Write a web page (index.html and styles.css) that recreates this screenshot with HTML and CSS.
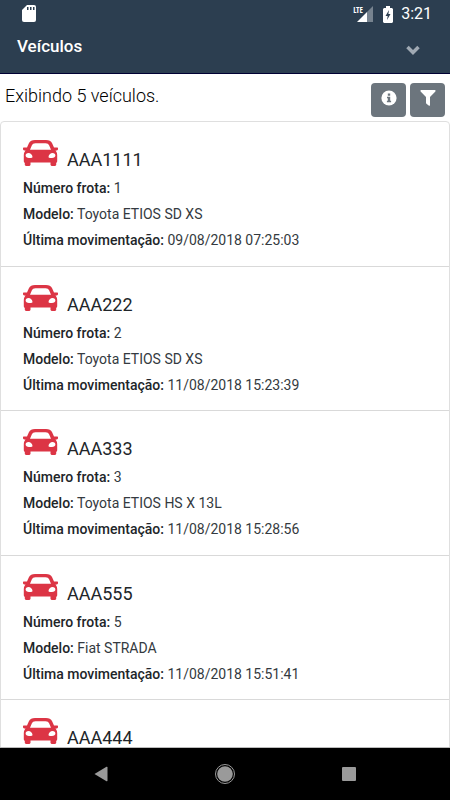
FILE: index.html
```html
<!DOCTYPE html>
<html lang="pt-BR">
<head>
<meta charset="utf-8">
<meta name="viewport" content="width=device-width, initial-scale=1">
<title>Veículos</title>
<link rel="stylesheet" href="styles.css">
</head>
<body>
<svg class="defs" aria-hidden="true">
  <symbol id="car" viewBox="0 0 35 26">
    <path fill-rule="evenodd" d="M12 0H23C26 0 28 1 29 3L31 7.500H34.500L35 8V9.500L34 10.500H32.500L33.500 12C34 13 34.200 14 34.200 15V21C34.200 22 33.800 22.500 33.200 23V25L32.200 26H28.500L27.500 25V22.500H7.500V25L6.500 26H2.800L1.800 25V23C1.200 22.500.8 22 .8 21V15C.8 14 1 13 1.500 12L2.500 10.500H1L0 9.500V8L.5 7.500H4L6 3C7 1 9 0 12 0ZM12.500 3.200C10.500 3.200 9.600 4 8.900 5.300L7 9.800H28L26.100 5.300C25.400 4 24.500 3.200 22.500 3.200ZM5.500 13C3.700 13 2.600 14 2.600 15.500S4 18 6 18C7.500 18 9.500 18.200 9.500 17C9.500 15.200 7.500 13 5.500 13ZM29.500 13C27.500 13 25.500 15.200 25.500 17C25.500 18.200 27.500 18 29 18C31 18 32.400 17 32.400 15.500S31.300 13 29.500 13Z"/>
  </symbol>
</svg>
<div class="app">
  <header class="header">
    <div class="status">
      <svg class="sd" viewBox="0 0 14 18" aria-hidden="true"><path fill="#fff" d="M5 0H12Q14 0 14 2V15Q14 17 12 17H2Q0 17 0 15V5Z"/><path fill="#2c3e50" d="M5 2h1.500v3H5zM8 2h1.500v3H8zM11 2h1.500v3H11z"/></svg>
      <div class="signal">
        <span class="lte">LTE</span>
        <svg viewBox="0 0 16 16" aria-hidden="true"><path fill="#fff" d="M0 16L10 6V16Z"/><path fill="#77838f" d="M10 6L16 0V16H10Z"/></svg>
      </div>
      <svg class="battery" viewBox="0 0 10 17" aria-hidden="true"><path fill="#fff" d="M3 0H7V2H9L10 3V16L9 17H1L0 16V3L1 2H3Z"/><path fill="#2c3e50" d="M6 4L2.500 10H4.700L4 14L7.500 8H5.400Z"/></svg>
      <span class="clock">3:21</span>
    </div>
    <div class="titlebar">
      <h1>Veículos</h1>
      <button class="expand" type="button" aria-label="Expandir"><svg viewBox="0 0 14 10"><path d="M1.500 2L7 7.500L12.500 2"/></svg></button>
    </div>
  </header>
  <main class="content">
    <div class="toolbar">
      <p>Exibindo 5 veículos.</p>
      <div class="actions">
        <button type="button" aria-label="Informações"><svg viewBox="0 0 16 16"><circle cx="8" cy="8" r="7.600" fill="#fff"/><path fill="#6c757d" d="M6.800 3.500h2.400v2.200H6.800zM6 6.800h3.200v4h.9v1.500H5.900v-1.500h.9V8.300H6z"/></svg></button>
        <button type="button" aria-label="Filtrar"><svg viewBox="0 0 16 16"><path fill="#fff" d="M1 0H15Q16 .5 15.400 1.400L10 7V15.200Q9.700 16 9 15.700L6.400 13.700L6 13V7L.6 1.400Q0 .5 1 0Z"/></svg></button>
      </div>
    </div>
    <ul class="list">
      <li>
        <h2><svg class="car" aria-hidden="true"><use href="#car"/></svg><span>AAA1111</span></h2>
        <p><b>Número frota:</b> 1</p>
        <p><b>Modelo:</b> Toyota ETIOS SD XS</p>
        <p><b>Última movimentação:</b> 09/08/2018 07:25:03</p>
      </li>
      <li>
        <h2><svg class="car" aria-hidden="true"><use href="#car"/></svg><span>AAA222</span></h2>
        <p><b>Número frota:</b> 2</p>
        <p><b>Modelo:</b> Toyota ETIOS SD XS</p>
        <p><b>Última movimentação:</b> 11/08/2018 15:23:39</p>
      </li>
      <li>
        <h2><svg class="car" aria-hidden="true"><use href="#car"/></svg><span>AAA333</span></h2>
        <p><b>Número frota:</b> 3</p>
        <p><b>Modelo:</b> Toyota ETIOS HS X 13L</p>
        <p><b>Última movimentação:</b> 11/08/2018 15:28:56</p>
      </li>
      <li>
        <h2><svg class="car" aria-hidden="true"><use href="#car"/></svg><span>AAA555</span></h2>
        <p><b>Número frota:</b> 5</p>
        <p><b>Modelo:</b> Fiat STRADA</p>
        <p><b>Última movimentação:</b> 11/08/2018 15:51:41</p>
      </li>
      <li>
        <h2><svg class="car" aria-hidden="true"><use href="#car"/></svg><span>AAA444</span></h2>
      </li>
    </ul>
  </main>
  <nav class="navbar" aria-label="Sistema">
    <button type="button" aria-label="Voltar"><svg viewBox="0 0 22 22"><path d="M4.500 11L16.500 3.800Q17.500 3.500 17.500 4.500V17.500Q17.500 18.500 16.500 18.200Z"/></svg></button>
    <button type="button" aria-label="Início"><svg viewBox="0 0 22 22"><circle cx="11" cy="11" r="7.800"/><circle class="ring" cx="11" cy="11" r="9.500"/></svg></button>
    <button type="button" aria-label="Recentes"><svg viewBox="0 0 22 22"><rect x="4" y="4" width="14" height="14" rx="1"/></svg></button>
  </nav>
</div>
</body>
</html>
```

FILE: styles.css
```css
* { box-sizing: border-box; }
body, h1, h2, p, ul { margin: 0; padding: 0; }
body { font: 14px/26px Roboto, sans-serif; color: #212529; background: #fff; }
button { border: 0; padding: 0; background: none; display: flex; align-items: center; justify-content: center; }
svg { display: block; }
.defs { position: absolute; width: 0; height: 0; }
.app { display: flex; flex-direction: column; height: 100vh; }

.header { flex: none; background: #2c3e50; color: #fff; border-bottom: 1px solid #000033; }
.status { display: flex; align-items: center; height: 28px; padding: 0 18px 0 22px; }
.sd { width: 14px; height: 18px; margin-right: auto; }
.signal { position: relative; width: 20px; padding-left: 4px; margin-right: 10px; }
.signal svg { width: 16px; height: 16px; }
.lte { position: absolute; left: 0; top: 0; font: 8px/8px "Open Sans Condensed", "DejaVu Sans Condensed", Roboto, sans-serif; }
.battery { width: 10px; height: 17px; margin-right: 8px; }
.clock { font-size: 16px; font-weight: 400; }
.titlebar { display: flex; justify-content: space-between; height: 45px; padding: 5px 30px 0 17px; }
h1 { font-size: 17px; line-height: 26px; font-weight: 500; }
.expand { width: 14px; height: 34px; }
.expand svg { width: 14px; height: 10px; fill: none; stroke: #a0a9b3; stroke-width: 3.500; }

.content { flex: 1; min-height: 0; overflow: hidden; border-bottom: 1px solid #bbb; }
.toolbar { display: flex; justify-content: space-between; height: 47px; padding: 9px 5px 0; }
.toolbar p { font-size: 18px; font-weight: 300; color: #000; }
.actions { display: flex; gap: 4px; }
.actions button { width: 35px; height: 34px; padding-bottom: 4px; border-radius: 4px; background: #6c757d; }
.actions svg { width: 16px; height: 16px; }
.list { list-style: none; border: 1px solid #dfdfdf; border-radius: 4px; }
.list li { padding: 17px 22px 13px; border-bottom: 1px solid #d9d9d9; }
.list li:nth-child(even) { padding-bottom: 12px; }
.list h2 { display: flex; gap: 9px; height: 36px; font-size: 18px; line-height: 42px; font-weight: 400; }
.list p { color: #343a40; }
.car { width: 35px; height: 28px; fill: #dc3545; }
.list b { font-weight: 500; color: #212529; }

.navbar { flex: none; display: flex; justify-content: center; gap: 102px; height: 52px; background: #000; }
.navbar svg { width: 22px; height: 22px; fill: #9a9a9a; }
.navbar .ring { fill: none; stroke: #9a9a9a; stroke-width: 1; }
```
